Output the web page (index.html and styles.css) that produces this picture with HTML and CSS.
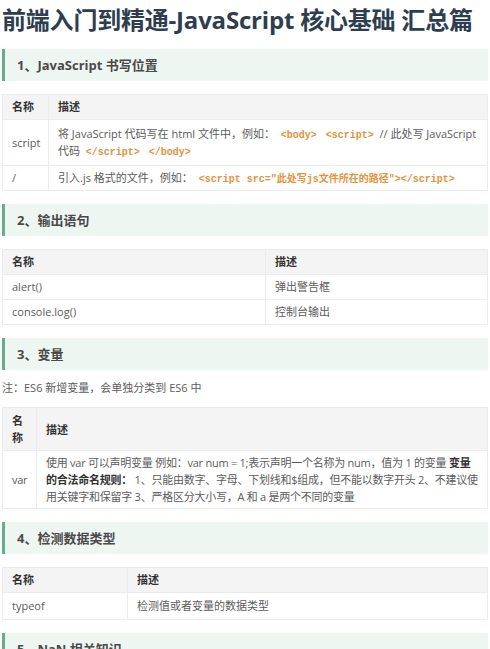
FILE: index.html
```html
<!DOCTYPE html>
<html lang="zh-CN">
<head>
  <meta charset="UTF-8" />
  <meta name="viewport" content="width=device-width, initial-scale=1.0"/>
  <title>前端入门到精通-JavaScript 核心基础 汇总篇</title>
  <link rel="stylesheet" href="styles.css">
</head>
<body>

  <h1 class="page-title">前端入门到精通-JavaScript 核心基础 汇总篇</h1>

  <h2 class="section-title">1、JavaScript 书写位置</h2>
  <table class="doc-table t-write">
    <tr><th class="col-name">名称</th><th>描述</th></tr>
    <tr class="row-tall">
      <td>script</td>
      <td>将 JavaScript 代码写在 html 文件中，例如： <code>&lt;body&gt;</code> <code>&lt;script&gt;</code> // 此处写 JavaScript 代码 <code>&lt;/script&gt;</code> <code>&lt;/body&gt;</code></td>
    </tr>
    <tr>
      <td>/</td>
      <td>引入.js 格式的文件，例如： <code>&lt;script src="此处写js文件所在的路径"&gt;&lt;/script&gt;</code></td>
    </tr>
  </table>

  <h2 class="section-title">2、输出语句</h2>
  <table class="doc-table t-output">
    <tr><th class="col-name">名称</th><th>描述</th></tr>
    <tr><td>alert()</td><td>弹出警告框</td></tr>
    <tr><td>console.log()</td><td>控制台输出</td></tr>
  </table>

  <h2 class="section-title">3、变量</h2>
  <p class="note">注：ES6 新增变量，会单独分类到 ES6 中</p>
  <table class="doc-table t-var">
    <tr><th class="col-name">名称</th><th>描述</th></tr>
    <tr>
      <td>var</td>
      <td>使用 var 可以声明变量 例如：var num = 1;表示声明一个名称为 num，值为 1 的变量 <strong>变量的合法命名规则：</strong> 1、只能由数字、字母、下划线和$组成，但不能以数字开头 2、不建议使用关键字和保留字 3、严格区分大小写，A 和 a 是两个不同的变量</td>
    </tr>
  </table>

  <h2 class="section-title">4、检测数据类型</h2>
  <table class="doc-table t-type">
    <tr><th class="col-name">名称</th><th>描述</th></tr>
    <tr><td>typeof</td><td>检测值或者变量的数据类型</td></tr>
  </table>

  <h2 class="section-title">5、NaN 相关知识</h2>

</body>
</html>
```

FILE: styles.css
```css
* { box-sizing: border-box; margin: 0; padding: 0; }

body {
  font-family: "Open Sans", "Noto Sans CJK SC", sans-serif;
  background: #fff;
  color: #5c5c5c;
  padding: 0 2px;
  height: 649px;
  overflow: hidden;
}

.page-title {
  font-size: 24px;
  font-weight: 700;
  color: #2c3e50;
  line-height: 30px;
  padding-top: 5px;
  letter-spacing: -0.2px;
  white-space: nowrap;
}

.section-title {
  margin-top: 13px;
  height: 32px;
  line-height: 32px;
  padding-left: 12px;
  background: #eef6f2;
  border-left: 3px solid #62b08c;
  font-size: 13px;
  font-weight: 700;
  color: #4a4a4a;
}

.page-title + .section-title { margin-top: 14px; }

.note {
  font-size: 11px;
  line-height: 17px;
  margin-top: 9px;
  color: #5c5c5c;
}

.doc-table {
  width: 100%;
  border-collapse: collapse;
  margin-top: 13px;
  font-size: 11px;
  line-height: 16px;
  table-layout: fixed;
}

.doc-table th,
.doc-table td {
  border: 1px solid #ececec;
  padding: 4px 9px;
  text-align: left;
  vertical-align: middle;
}

.doc-table th {
  background: #f4f4f4;
  font-weight: 700;
  color: #333;
}

.row-tall td { padding-top: 5px; padding-bottom: 6px; line-height: 17px; }

.note + .doc-table { margin-top: 11px; }

.t-write .col-name { width: 46px; }
.t-output .col-name { width: 263px; }
.t-var .col-name { width: 34px; }
.t-var th { padding-top: 4px; padding-bottom: 4px; line-height: 17px; }
.t-var td { padding-top: 3px; padding-bottom: 3px; line-height: 17px; letter-spacing: -0.25px; }
.t-type .col-name { width: 125px; }
.t-type td { padding-top: 5px; padding-bottom: 5px; }

.doc-table td:first-child,
.doc-table th:first-child { padding-left: 9px; padding-right: 4px; }

.doc-table strong { color: #333; }

code {
  font-family: "Liberation Mono", "Noto Sans CJK SC", monospace;
  font-size: 10px;
  line-height: 1;
  font-weight: 700;
  color: #e4923b;
  padding: 0 3px;
}
```
